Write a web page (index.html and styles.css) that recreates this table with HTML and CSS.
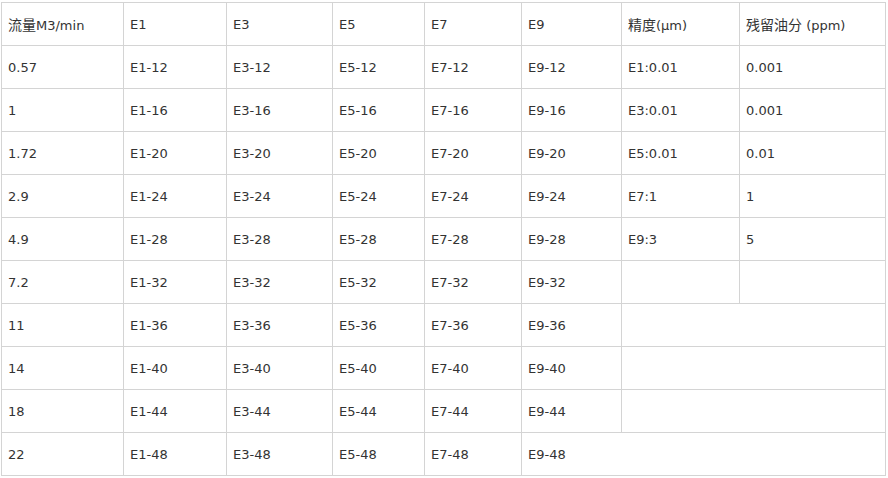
FILE: index.html
```html
<!DOCTYPE html>
<html lang="zh">
<head>
<meta charset="utf-8">
<title>流量表</title>
<link rel="stylesheet" href="styles.css">
</head>
<body>
<table class="spec">
  <colgroup>
    <col class="c1"><col class="c2"><col class="c3"><col class="c4"><col class="c5"><col class="c6"><col class="c7"><col class="c8">
  </colgroup>
  <tbody>
    <tr><td><span class="cjk">流量</span>M3/min</td><td>E1</td><td>E3</td><td>E5</td><td>E7</td><td>E9</td><td><span class="cjk">精度</span>(μm)</td><td><span class="cjk">残留油分</span> (ppm)</td></tr>
    <tr><td>0.57</td><td>E1-12</td><td>E3-12</td><td>E5-12</td><td>E7-12</td><td>E9-12</td><td>E1:0.01</td><td>0.001</td></tr>
    <tr><td>1</td><td>E1-16</td><td>E3-16</td><td>E5-16</td><td>E7-16</td><td>E9-16</td><td>E3:0.01</td><td>0.001</td></tr>
    <tr><td>1.72</td><td>E1-20</td><td>E3-20</td><td>E5-20</td><td>E7-20</td><td>E9-20</td><td>E5:0.01</td><td>0.01</td></tr>
    <tr><td>2.9</td><td>E1-24</td><td>E3-24</td><td>E5-24</td><td>E7-24</td><td>E9-24</td><td>E7:1</td><td>1</td></tr>
    <tr><td>4.9</td><td>E1-28</td><td>E3-28</td><td>E5-28</td><td>E7-28</td><td>E9-28</td><td>E9:3</td><td>5</td></tr>
    <tr><td>7.2</td><td>E1-32</td><td>E3-32</td><td>E5-32</td><td>E7-32</td><td>E9-32</td><td></td><td></td></tr>
    <tr><td>11</td><td>E1-36</td><td>E3-36</td><td>E5-36</td><td>E7-36</td><td>E9-36</td><td colspan="2"></td></tr>
    <tr><td>14</td><td>E1-40</td><td>E3-40</td><td>E5-40</td><td>E7-40</td><td>E9-40</td><td colspan="2"></td></tr>
    <tr><td>18</td><td>E1-44</td><td>E3-44</td><td>E5-44</td><td>E7-44</td><td>E9-44</td><td colspan="2"></td></tr>
    <tr><td>22</td><td>E1-48</td><td>E3-48</td><td>E5-48</td><td>E7-48</td><td colspan="3">E9-48</td></tr>
  </tbody>
</table>
</body>
</html>
```
FILE: styles.css
```css
html, body {
  background: #ffffff;
}
body {
  margin: 2px 0 0 1px;
  font-family: "DejaVu Sans", "Noto Sans CJK SC", sans-serif;
  font-size: 13px;
  color: #333333;
}
.spec {
  border-collapse: collapse;
  table-layout: fixed;
  width: 885px;
}
.spec .c1 { width: 122px; }
.spec .c2 { width: 103px; }
.spec .c3 { width: 106px; }
.spec .c4 { width: 92px; }
.spec .c5 { width: 97px; }
.spec .c6 { width: 100px; }
.spec .c7 { width: 118px; }
.spec .c8 { width: 146px; }
.spec tr {
  height: 43px;
}
.spec td {
  border: 1px solid #d4d4d4;
  height: 42px;
  padding: 2px 6px 0;
  box-sizing: border-box;
  vertical-align: middle;
  text-align: left;
  white-space: nowrap;
  line-height: 18px;
}
.cjk {
  font-family: "Noto Sans CJK SC", sans-serif;
  font-size: 14px;
}
```
